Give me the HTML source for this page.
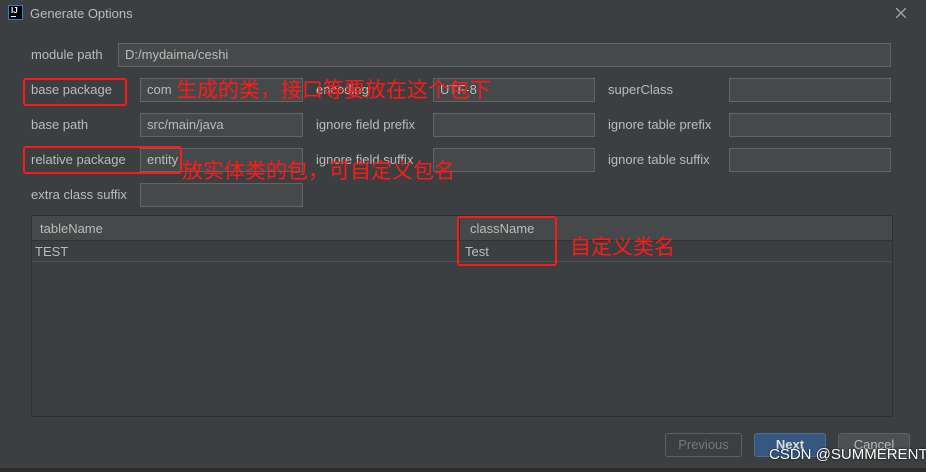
<!DOCTYPE html>
<html><head><meta charset="utf-8"><style>
*{margin:0;padding:0;box-sizing:border-box}
html,body{width:926px;height:472px}
body{background:#3c3f41;position:relative;overflow:hidden;font-family:"Liberation Sans","Noto Sans CJK SC",sans-serif;font-size:13px;color:#bbbbbb}
.a{position:absolute;white-space:nowrap}
.in{position:absolute;height:24px;background:#45494a;border:1px solid #646464;padding-left:6px;line-height:22px;color:#bbbbbb}
.lb{position:absolute;line-height:24px}
.rb{position:absolute;border:2px solid #ff1a1a;border-radius:3px}
.rt{position:absolute;color:#ff1a1a;font-size:21px;font-family:"Noto Sans CJK SC",sans-serif;line-height:26px;white-space:nowrap}
.btn{position:absolute;top:433px;height:24px;border:1px solid #5e6060;border-radius:3px;text-align:center;line-height:22px}
</style></head><body>
<div class="a" style="left:8px;top:5px;width:15px;height:15px;background:#000;border:1px solid #2f7fd8;color:#fff;font-size:8px;font-weight:bold;line-height:10px;padding-left:2px">IJ<div style="width:5px;height:1px;background:#fff"></div></div>
<div class="a" style="left:30px;top:6px;font-size:13px">Generate Options</div>
<svg class="a" style="left:896px;top:8px" width="10" height="10"><path d="M0 0L10 10M10 0L0 10" stroke="#aaa" stroke-width="1.3"/></svg>

<div class="lb" style="left:31px;top:43px">module path</div>
<div class="in" style="left:118px;top:43px;width:773px">D:/mydaima/ceshi</div>

<div class="lb" style="left:31px;top:78px">base package</div>
<div class="in" style="left:140px;top:78px;width:163px">com</div>
<div class="lb" style="left:316px;top:78px">encoding</div>
<div class="in" style="left:433px;top:78px;width:162px">UTF-8</div>
<div class="lb" style="left:608px;top:78px">superClass</div>
<div class="in" style="left:729px;top:78px;width:162px"></div>

<div class="lb" style="left:31px;top:113px">base path</div>
<div class="in" style="left:140px;top:113px;width:163px">src/main/java</div>
<div class="lb" style="left:316px;top:113px">ignore field prefix</div>
<div class="in" style="left:433px;top:113px;width:162px"></div>
<div class="lb" style="left:608px;top:113px">ignore table prefix</div>
<div class="in" style="left:729px;top:113px;width:162px"></div>

<div class="lb" style="left:31px;top:148px">relative package</div>
<div class="in" style="left:140px;top:148px;width:163px">entity</div>
<div class="lb" style="left:316px;top:148px">ignore field suffix</div>
<div class="in" style="left:433px;top:148px;width:162px"></div>
<div class="lb" style="left:608px;top:148px">ignore table suffix</div>
<div class="in" style="left:729px;top:148px;width:162px"></div>

<div class="lb" style="left:31px;top:183px">extra class suffix</div>
<div class="in" style="left:140px;top:183px;width:163px"></div>

<div class="a" style="left:31px;top:215px;width:862px;height:202px;border:1px solid #2e3032;background:#3c3f41">
 <div class="a" style="left:0;top:0;width:860px;height:25px;background:#45494a;border-bottom:1px solid #323232"></div>
 <div class="a" style="left:427px;top:0;width:1px;height:25px;background:#323232"></div>
 <div class="a" style="left:8px;top:5px">tableName</div>
 <div class="a" style="left:438px;top:5px">className</div>
 <div class="a" style="left:0;top:45px;width:860px;height:1px;background:#4e5254"></div>
 <div class="a" style="left:3px;top:28px">TEST</div>
 <div class="a" style="left:433px;top:28px">Test</div>
</div>

<div class="btn" style="left:665px;width:77px;color:#777">Previous</div>
<div class="btn" style="left:754px;width:72px;background:#365880;border-color:#4c708c;color:#ddd;font-weight:bold">Next</div>
<div class="btn" style="left:838px;width:72px;background:#4c5052">Cancel</div>
<div class="a" style="left:769px;top:446px;color:#fff;font-size:15px;text-shadow:0 0 2px #000">CSDN @SUMMERENT</div>
<div class="a" style="left:0;top:468px;width:926px;height:4px;background:#2b2b2b"></div>

<div class="rb" style="left:23px;top:78px;width:104px;height:28px"></div>
<div class="rb" style="left:23px;top:146px;width:159px;height:28px"></div>
<div class="rb" style="left:457px;top:216px;width:100px;height:50px"></div>
<div class="rt" style="left:176px;top:76px">生成的类，接口等要放在这个包下</div>
<div class="rt" style="left:182px;top:157px">放实体类的包，可自定义包名</div>
<div class="rt" style="left:570px;top:233px">自定义类名</div>
</body></html>
